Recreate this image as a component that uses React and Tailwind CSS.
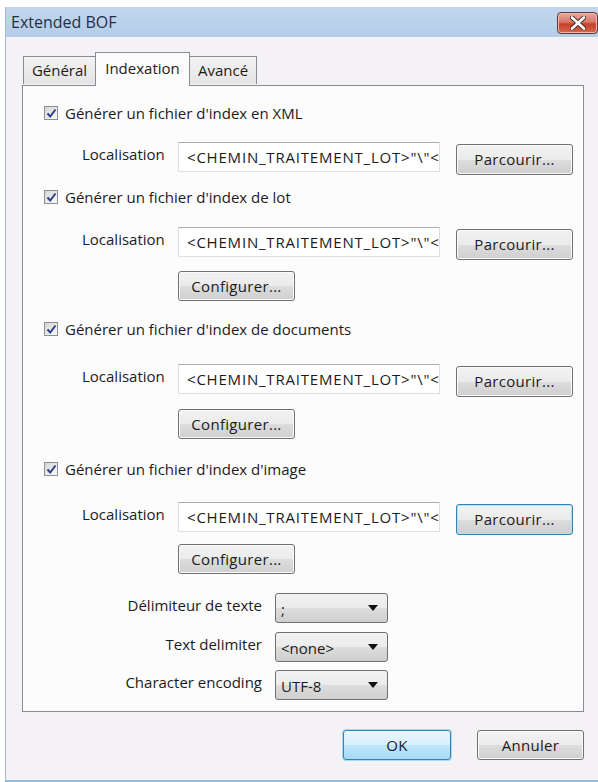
import React from "react";

const font = { fontFamily: '"Open Sans", "Noto Sans", "Liberation Sans", sans-serif' };

function Check({ label }) {
  return (
    <div className="flex items-center h-[20px] ml-[21px]">
      <div className="w-[14px] h-[14px] border border-[#8e8f8f] bg-gradient-to-br from-[#d6d6d6] to-[#fbfbfb] flex items-center justify-center">
        <svg width="11" height="11" viewBox="0 0 11 11">
          <path d="M1.5 5.5 L4.2 8.5 L9.5 1.5" fill="none" stroke="#2b3f8a" strokeWidth="2" />
        </svg>
      </div>
      <span className="ml-[7px] text-[15px] text-[#1b1b1b] leading-none">{label}</span>
    </div>
  );
}

function Btn({ children, w = 117, h = 31, focused = false, def = false }) {
  const base = "rounded-[3px] border flex items-center justify-center text-[15px] text-[#1b1b1b] tracking-[0.3px]";
  if (def) {
    return (
      <div className={`${base} border-[#3c7fb1] shadow-[0_0_0_1px_#9fdcf6] bg-[linear-gradient(#eaf6fd_0%,#d9f0fc_50%,#bee6fd_51%,#a7d9f5_100%)]`} style={{ width: w, height: h }}>
        {children}
      </div>
    );
  }
  return (
    <div
      className={`${base} ${focused ? "border-[#3c7fb1] shadow-[inset_0_0_0_1px_#a8e3f7]" : "border-[#707070] shadow-[inset_0_0_0_1px_#fbfbfb]"} bg-[linear-gradient(#f2f2f2_0%,#ebebeb_50%,#dddddd_51%,#cfcfcf_100%)]`}
      style={{ width: w, height: h }}
    >
      {children}
    </div>
  );
}

function LocRow({ focused }) {
  return (
    <div className="flex items-start">
      <div className="w-[155px] pl-[59px] pt-[1px] text-[15px] text-[#1b1b1b]">Localisation</div>
      <div className="w-[262px] h-[30px] border border-[#dbdfe6] border-t-[#abadb3] bg-white overflow-hidden whitespace-nowrap pl-[8px] flex items-center text-[15px] tracking-[0.8px] text-[#1b1b1b]">
        <span className="overflow-hidden">{'<CHEMIN_TRAITEMENT_LOT>"\\"<'}</span>
      </div>
      <div className="ml-[16px] mt-[2px]">
        <Btn focused={focused}>Parcourir...</Btn>
      </div>
    </div>
  );
}

function ConfRow({ mt }) {
  return (
    <div className={`pl-[155px] ${mt}`}>
      <Btn h={30}>Configurer...</Btn>
    </div>
  );
}

function SelRow({ label, value, mt }) {
  return (
    <div className={`flex items-start ${mt}`}>
      <div className="w-[239px] text-right text-[15px] text-[#1b1b1b] pt-[1px]">{label}</div>
      <div className="ml-[13px] w-[113px] h-[30px] rounded-[3px] border border-[#707070] bg-[linear-gradient(#f2f2f2_0%,#ebebeb_50%,#dddddd_51%,#cfcfcf_100%)] flex items-center justify-between pl-[5px] pr-[9px] text-[15px] text-[#1b1b1b]">
        <span className="pt-[3px]">{value}</span>
        <svg width="10" height="6" viewBox="0 0 10 6">
          <path d="M0 0 H10 L5 6 Z" fill="#111" />
        </svg>
      </div>
    </div>
  );
}

export default function App() {
  return (
    <div className="w-[598px] h-[782px] bg-white overflow-hidden" style={font}>
      <div className="ml-[5px] mt-[7px] h-[775px] flex flex-col border-l border-[#a8b8c8]">
        {/* title bar */}
        <div className="h-[30px] bg-[linear-gradient(#c2d7ed,#b4cde8)] flex items-center justify-between">
          <span className="ml-[5px] text-[16px] text-[#1f2f4a]">Extended BOF</span>
          <div className="mt-[2px] w-[41px] h-[22px] rounded-[4px] border border-[#5f3a36] bg-[linear-gradient(#e9a99c_0%,#d8776a_45%,#c7402a_55%,#d46a4f_100%)] flex items-center justify-center shadow-[inset_0_0_0_1px_#f0b8ad]">
            <svg width="16" height="14" viewBox="0 0 16 14">
              <path d="M2 1.5 L14 12.5 M14 1.5 L2 12.5" stroke="#4a2a2a" strokeWidth="4.5" strokeLinecap="round" />
              <path d="M2 1.5 L14 12.5 M14 1.5 L2 12.5" stroke="#ffffff" strokeWidth="2.6" strokeLinecap="round" />
            </svg>
          </div>
        </div>
        {/* body */}
        <div className="flex-1 bg-[#f4f2f4] pl-[16px] flex flex-col">
          {/* tabs */}
          <div className="flex items-end h-[48px] pl-[1px] relative z-10">
            <div className="w-[72px] h-[28px] border border-[#898c95] border-b-0 border-r-0 bg-[linear-gradient(#f3f3f3,#e4e4e4)] flex items-center justify-center text-[15px] text-[#1b1b1b] mb-[1px]">
              Général
            </div>
            <div className="w-[95px] h-[34px] border border-[#898c95] border-b-0 bg-[#fcfcfc] flex items-start justify-center pt-[4px] text-[15px] text-[#1b1b1b] -mb-[1px]">
              Indexation
            </div>
            <div className="w-[67px] h-[28px] border border-[#898c95] border-b-0 border-l-0 bg-[linear-gradient(#f3f3f3,#e4e4e4)] flex items-center justify-center text-[15px] text-[#1b1b1b] mb-[1px]">
              Avancé
            </div>
          </div>
          {/* panel */}
          <div className="w-[562px] h-[627px] border border-[#898c95] bg-[#fcfcfc] flex flex-col">
            <div className="mt-[17px]"><Check label="Générer un fichier d'index en XML" /></div>
            <div className="mt-[19px]"><LocRow /></div>
            <div className="mt-[12px]"><Check label="Générer un fichier d'index de lot" /></div>
            <div className="mt-[20px]"><LocRow /></div>
            <ConfRow mt="mt-[11px]" />
            <div className="mt-[18px]"><Check label="Générer un fichier d'index de documents" /></div>
            <div className="mt-[25px]"><LocRow /></div>
            <ConfRow mt="mt-[12px]" />
            <div className="mt-[20px]"><Check label="Générer un fichier d'index d'image" /></div>
            <div className="mt-[23px]"><LocRow focused /></div>
            <ConfRow mt="mt-[9px]" />
            <SelRow mt="mt-[19px]" label="Délimiteur de texte" value=";" />
            <SelRow mt="mt-[9px]" label="Text delimiter" value="<none>" />
            <SelRow mt="mt-[8px]" label="Character encoding" value="UTF-8" />
          </div>
          {/* footer buttons */}
          <div className="flex mt-[18px] pl-[321px]">
            <Btn w={108} h={30} def>OK</Btn>
            <div className="ml-[26px]"><Btn w={107} h={30}>Annuler</Btn></div>
          </div>
          <div className="flex-1" />
        </div>
        <div className="h-[2px] bg-[#8fc0dc]" />
      </div>
    </div>
  );
}
